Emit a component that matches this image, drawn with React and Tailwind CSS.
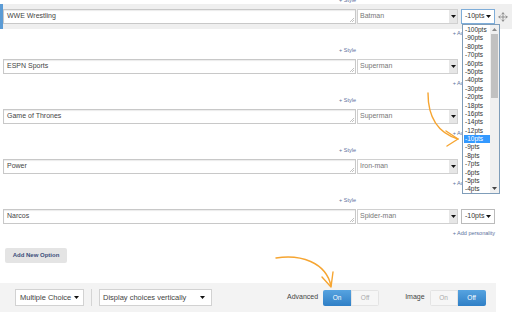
import React from "react";
import { Move } from "lucide-react";

const ptsOptions = [
  "-100pts", "-90pts", "-80pts", "-70pts", "-60pts", "-50pts", "-40pts", "-30pts", "-20pts", "-18pts",
  "-16pts", "-14pts", "-12pts", "-10pts", "-9pts", "-8pts", "-7pts", "-6pts", "-5pts", "-4pts",
];

// rows 2-4 keep their points select hidden behind the open list
const rows = [
  { label: "WWE Wrestling", hero: "Batman", active: true },
  { label: "ESPN Sports", hero: "Superman", covered: true },
  { label: "Game of Thrones", hero: "Superman", covered: true },
  { label: "Power", hero: "Iron-man", covered: true },
  { label: "Narcos", hero: "Spider-man", last: true },
];

const Caret = ({ className = "" }) => (
  <svg width="5" height="3" viewBox="0 0 5 3" className={className}>
    <path d="M0 0h5L2.5 3z" fill="#111" />
  </svg>
);

const StyleLink = () => (
  <div className="w-[356px] text-right text-[5.5px] leading-[8px] text-[#5b6f9c]">+ Style</div>
);

const PtsDropdown = () => (
  <div className="absolute left-0 top-[14px] z-10 h-[170px] w-[38px] border border-[#7f9db9] bg-white">
    <div className="pt-px">
      {ptsOptions.map((opt) => (
        <div
          key={opt}
          className={
            opt === "-10pts"
              ? "ml-px h-[8.4px] w-[27px] bg-[#3399ff] pl-px text-[6.5px] leading-[8.4px] text-white"
              : "ml-px h-[8.4px] w-[27px] pl-px text-[6.5px] leading-[8.4px] text-[#333]"
          }
        >
          {opt}
        </div>
      ))}
    </div>
    <div className="absolute bottom-0 right-0 top-0 w-[9px] bg-[#f0f0f0]">
      <svg width="5" height="3" viewBox="0 0 5 3" className="absolute left-[2px] top-[3px]">
        <path d="M0 3h5L2.5 0z" fill="#888" />
      </svg>
      <div className="absolute left-px top-[9px] h-[64px] w-[7px] bg-[#c1c1c1]" />
      <svg width="5" height="3" viewBox="0 0 5 3" className="absolute bottom-[3px] left-[2px]">
        <path d="M0 0h5L2.5 3z" fill="#444" />
      </svg>
    </div>
  </div>
);

const OptionRow = ({ label, hero, active, covered, last }) => (
  <div className={last ? "h-[34px]" : "h-[50px]"}>
    <div
      className={
        active
          ? "flex h-[25px] items-center border-l-[3px] border-[#5b9bd5] bg-[#efefef]"
          : "flex h-[25px] items-center pl-[3px]"
      }
    >
      <div className="relative flex h-[15px] w-[353px] items-center border border-[#c8c8c8] bg-white pl-[3px] text-[7px] text-[#444] shadow-[inset_0_1px_1px_rgba(0,0,0,0.08)]">
        {label}
        <svg width="4" height="4" viewBox="0 0 4 4" className="absolute bottom-px right-px">
          <path d="M4 0L0 4M4 2L2 4" stroke="#999" strokeWidth="0.6" />
        </svg>
      </div>
      <div className="ml-px flex h-[15px] w-[101px] items-stretch border border-[#d0d0d0] bg-white">
        <div className="flex flex-1 items-center pl-[2px] text-[7px] text-[#777]">{hero}</div>
        <div className="flex w-[8px] items-center justify-center bg-[#e6e6e6]">
          <Caret />
        </div>
      </div>
      {!covered && (
        <div
          className={
            active
              ? "relative ml-[3px] flex h-[15px] w-[34px] items-center justify-between border border-[#7eadd9] bg-white pl-[3px] pr-[3px] text-[7px] text-[#333]"
              : "relative ml-[3px] flex h-[15px] w-[34px] items-center justify-between border border-[#bbb] bg-white pl-[3px] pr-[3px] text-[7px] text-[#333]"
          }
        >
          -10pts
          <Caret />
          {active && <PtsDropdown />}
        </div>
      )}
      {active && <Move size={10} strokeWidth={1.8} className="ml-[3px] text-[#777]" />}
    </div>
    <div className="h-[9px] pr-[17px] text-right text-[5.5px] leading-[9px] text-[#5b6f9c]">
      + Add personality
    </div>
    {!last && (
      <div className="mt-[8px]">
        <StyleLink />
      </div>
    )}
  </div>
);

const Toggle = ({ on }) => (
  <div className="flex h-[16px] w-[56px] overflow-hidden rounded-[2px] text-[6.5px]">
    <div
      className={
        on
          ? "flex w-[28px] items-center justify-center bg-gradient-to-b from-[#56a3e0] to-[#2f7fc6] text-white"
          : "flex w-[28px] items-center justify-center border border-[#e4e4e4] bg-[#f6f6f6] text-[#aaa]"
      }
    >
      On
    </div>
    <div
      className={
        on
          ? "flex w-[28px] items-center justify-center border border-[#e4e4e4] bg-[#f6f6f6] text-[#aaa]"
          : "flex w-[28px] items-center justify-center bg-gradient-to-b from-[#56a3e0] to-[#2f7fc6] text-white"
      }
    >
      Off
    </div>
  </div>
);

export default function App() {
  return (
    <div className="relative h-[312px] w-[512px] overflow-hidden bg-white font-['Liberation_Sans',Arial,sans-serif]">
      <div className="-mt-[4px] h-[8px]">
        <StyleLink />
      </div>

      {rows.map((row) => (
        <OptionRow key={row.label} {...row} />
      ))}

      <button
        type="button"
        className="ml-[5px] mt-[10px] flex h-[15px] w-[62px] items-center justify-center rounded-[2px] bg-[#e4e4e4] text-[6px] font-bold text-[#3b4f7a]"
      >
        Add New Option
      </button>

      <div className="mt-[20px] flex h-[29px] w-[496px] items-center bg-[#f3f3f3]">
        <div className="ml-[15px] flex h-[17px] w-[69px] items-center justify-between whitespace-nowrap border border-[#d2d2d2] bg-white pl-[4px] pr-[4px] text-[7.5px] text-[#444]">
          Multiple Choice
          <Caret />
        </div>
        <div className="ml-[7px] h-[17px] w-px bg-[#d4d4d4]" />
        <div className="ml-[7px] flex h-[17px] w-[113px] items-center justify-between whitespace-nowrap border border-[#d2d2d2] bg-white pl-[3px] pr-[6px] text-[7.5px] text-[#444]">
          Display choices vertically
          <Caret />
        </div>
        <span className="ml-[75px] text-[7px] text-[#444]">Advanced</span>
        <div className="ml-[5px]">
          <Toggle on />
        </div>
        <span className="ml-[26px] text-[7px] text-[#444]">Image</span>
        <div className="ml-[5px]">
          <Toggle on={false} />
        </div>
      </div>

      <svg width="512" height="312" className="pointer-events-none absolute left-0 top-0 z-20">
        <g fill="none" stroke="#f6a531" strokeWidth="1.4" strokeLinecap="round" strokeLinejoin="round">
          <path d="M428 93 C428 118 438 133 458 139" />
          <path d="M446 131 L458 139 L447 146" />
          <path d="M276 258 C300 254 326 262 331 286" />
          <path d="M322 277 L331 287 L333 272" />
        </g>
      </svg>
    </div>
  );
}
